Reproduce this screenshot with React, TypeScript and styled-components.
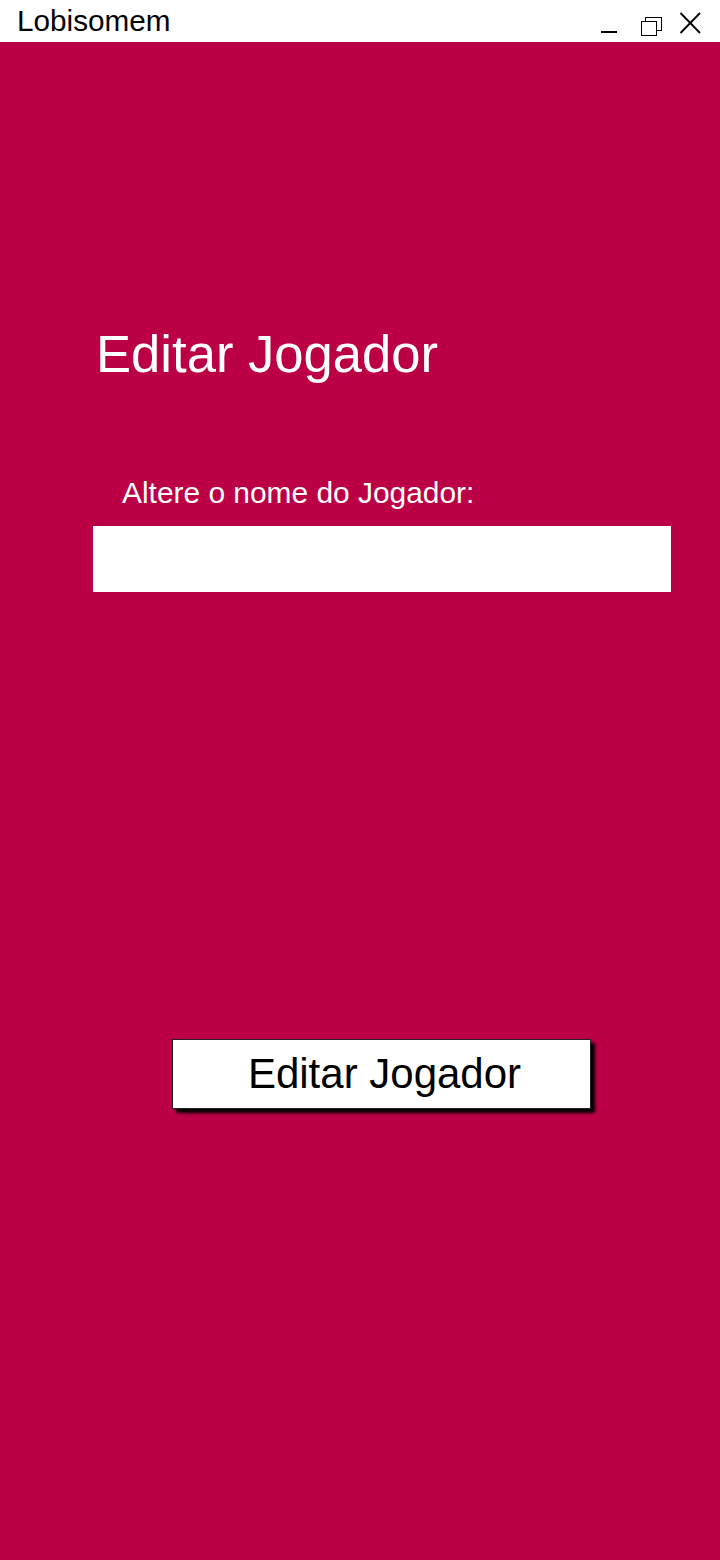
import React from "react";
import styled, { createGlobalStyle } from "styled-components";

const GlobalStyle = createGlobalStyle`
  html, body {
    margin: 0;
    padding: 0;
    background: #bc0045;
  }
  body {
    font-family: "Liberation Sans", Arial, sans-serif;
  }
  * { box-sizing: border-box; }
`;

const Window = styled.div`
  width: 720px;
  height: 1560px;
  display: flex;
  flex-direction: column;
  background: #bc0045;
`;

const TitleBar = styled.div`
  height: 42px;
  flex: none;
  background: #ffffff;
  display: flex;
  align-items: stretch;
  justify-content: space-between;
  padding-left: 17px;
  padding-right: 12px;
`;

const AppName = styled.span`
  font-size: 29.7px;
  line-height: 42px;
  color: #000;
  letter-spacing: 0;
`;

const Controls = styled.div`
  display: flex;
  align-items: stretch;
`;

const ControlIcon = styled.svg`
  display: block;
  height: 42px;
`;

const Content = styled.main`
  flex: 1;
  display: flex;
  flex-direction: column;
  align-items: flex-start;
  padding-top: 282px;
`;

const Heading = styled.h1`
  margin: 0 0 0 96px;
  font-size: 52.6px;
  line-height: 60px;
  font-weight: normal;
  color: #ffffff;
`;

const FieldLabel = styled.label`
  margin: 92px 0 0 122px;
  font-size: 29.9px;
  line-height: 34px;
  color: #ffffff;
`;

const NameInput = styled.input`
  margin: 16px 0 0 93px;
  width: 578px;
  height: 66px;
  border: none;
  outline: none;
  background: #ffffff;
  padding: 0 12px;
  font-family: "Liberation Sans", Arial, sans-serif;
  font-size: 28px;
`;

const ActionButton = styled.button`
  margin: 447px 0 0 172px;
  width: 419px;
  height: 70px;
  background: #ffffff;
  border: 1px solid #222;
  box-shadow: 4px 4px 3px #000;
  display: flex;
  align-items: center;
  justify-content: center;
  padding: 0 0 0 6px;
  font-family: "Liberation Sans", Arial, sans-serif;
  font-size: 42px;
  color: #000;
  cursor: pointer;
`;

export default function App() {
  return (
    <>
      <GlobalStyle />
      <Window>
        <TitleBar>
          <AppName>Lobisomem</AppName>
          <Controls>
            <ControlIcon width="40" viewBox="0 0 40 42">
              <line x1="5" y1="32" x2="21" y2="32" stroke="#000" strokeWidth="2" />
            </ControlIcon>
            <ControlIcon width="36" viewBox="0 0 36 42">
              <rect x="9.5" y="17.5" width="16" height="13" fill="#fff" stroke="#000" strokeWidth="1" />
              <rect x="5.5" y="21.5" width="15" height="14" fill="#fff" stroke="#000" strokeWidth="1" />
            </ControlIcon>
            <ControlIcon width="36" viewBox="0 0 36 42">
              <line x1="8.5" y1="13" x2="28" y2="33" stroke="#000" strokeWidth="1.8" />
              <line x1="28" y1="13" x2="8.5" y2="33" stroke="#000" strokeWidth="1.8" />
            </ControlIcon>
          </Controls>
        </TitleBar>
        <Content>
          <Heading>Editar Jogador</Heading>
          <FieldLabel htmlFor="player-name">Altere o nome do Jogador:</FieldLabel>
          <NameInput id="player-name" type="text" />
          <ActionButton type="button">Editar Jogador</ActionButton>
        </Content>
      </Window>
    </>
  );
}
